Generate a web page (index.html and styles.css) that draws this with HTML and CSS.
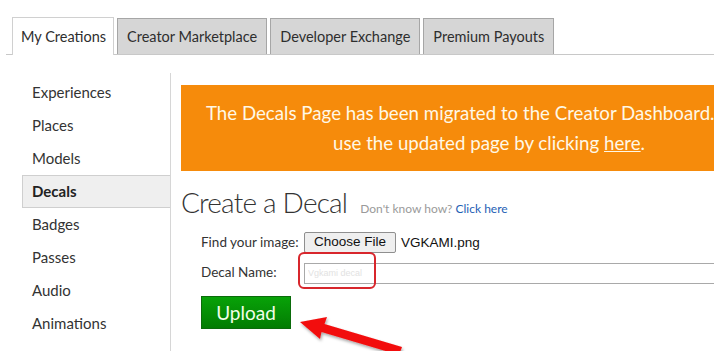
FILE: index.html
```html
<!DOCTYPE html>
<html lang="en">

<head>
    <meta charset="UTF-8">
    <meta name="viewport" content="width=device-width, initial-scale=1.0">
    <title>Create a Decal</title>
    <link rel="stylesheet" href="styles.css">
</head>

<body>
    <!-- Top tabs -->
    <div class="tabs">
        <div class="tab active">My Creations</div>
        <div class="tab">Creator Marketplace</div>
        <div class="tab">Developer Exchange</div>
        <div class="tab">Premium Payouts</div>
    </div>

    <div class="main">
        <ul class="side-nav">
            <li>Experiences</li>
            <li>Places</li>
            <li>Models</li>
            <li class="selected">Decals</li>
            <li>Badges</li>
            <li>Passes</li>
            <li>Audio</li>
            <li>Animations</li>
            <li>Meshes</li>
        </ul>

        <div class="content">
            <div class="banner">
                The Decals Page has been migrated to the Creator Dashboard. Please
                use the updated page by clicking <a href="#">here</a>.
            </div>

            <div class="title-row">
                <h1>Create a Decal</h1>
                <span class="help">Don't know how? <a href="#">Click here</a></span>
            </div>

            <form class="decal-form">
                <div class="form-row">
                    <label>Find your image:</label>
                    <span class="file-btn">Choose File</span>
                    <span class="file-name">VGKAMI.png</span>
                </div>
                <div class="form-row">
                    <label for="decal-name">Decal Name:</label>
                    <div class="name-wrap">
                        <input type="text" id="decal-name" class="name-input" value="Vgkami decal">
                        <span class="mark"></span>
                    </div>
                </div>
                <button type="button" class="upload-btn">Upload</button>
            </form>
        </div>
    </div>

    <!-- Red annotation arrow -->
    <svg class="arrow" width="120" height="50" viewBox="0 0 120 50">
        <defs>
            <filter id="shadow" x="-20%" y="-40%" width="140%" height="180%">
                <feDropShadow dx="1" dy="2" stdDeviation="1.5" flood-color="#000" flood-opacity="0.35" />
            </filter>
        </defs>
        <polygon filter="url(#shadow)" fill="#f20d0d"
            points="2,14 29,9 26.5,16 104,39 101,47 23.5,24 22,31" />
    </svg>
</body>

</html>
```

FILE: styles.css
```css
body {
    margin: 0;
    overflow: hidden;
    background-color: #ffffff;
    color: #343434;
    font-family: "Lato", "Noto Sans", sans-serif;
}

.tabs {
    display: flex;
    align-items: flex-end;
    gap: 3px;
    margin-left: 6px;
    padding: 17px 0 0 6px;
    border-bottom: 1px solid #c8c8c8;
    height: 55px;
    box-sizing: border-box;
}

.tab {
    height: 36px;
    line-height: 36px;
    padding: 0 9px;
    background: #d6d6d6;
    border: 1px solid #a6a6a6;
    border-bottom: none;
    box-sizing: border-box;
    font-size: 14.5px;
    color: #2e2e2e;
    flex-shrink: 0;
}

.tab.active {
    height: 38px;
    line-height: 38px;
    background: #ffffff;
    border-color: #d0d0d0;
    margin-bottom: -1px;
    padding: 0 7px 0 8px;
}

.main {
    display: flex;
    margin-top: 18px;
}

.side-nav {
    list-style: none;
    margin: 0 0 0 22px;
    padding: 3px 0 0 0;
    width: 148px;
    flex-shrink: 0;
    border-right: 1px solid #d6d6d6;
    height: 300px;
}

.side-nav li {
    height: 33px;
    line-height: 33px;
    padding-left: 10px;
    font-size: 15px;
    color: #333;
    box-sizing: border-box;
}

.side-nav li.selected {
    background: #efefef;
    border: 1px solid #cfcfcf;
    border-right: none;
    line-height: 31px;
    padding-left: 9px;
    font-weight: bold;
    color: #222;
}

.content {
    margin-left: 10px;
    padding-top: 12px;
    flex-shrink: 0;
}

.banner {
    width: 616px;
    height: 86px;
    box-sizing: border-box;
    padding: 13px 10px;
    background: #f68b0b;
    color: #fff8e6;
    font-size: 18.7px;
    line-height: 30px;
    text-align: center;
}

.banner a {
    color: #fff8e6;
    text-decoration: underline;
}

.title-row {
    display: flex;
    align-items: baseline;
    gap: 13px;
    margin-top: 12px;
}

.title-row h1 {
    margin: 0;
    font-size: 28px;
    font-weight: 300;
    letter-spacing: -0.8px;
    color: #333;
    line-height: 38px;
}

.help {
    font-size: 12px;
    color: #9a9a9a;
}

.help a {
    color: #1f5fb5;
    text-decoration: none;
}

.decal-form {
    margin: 6px 0 0 20px;
}

.form-row {
    display: flex;
    align-items: center;
    height: 30px;
}

.form-row label {
    width: 103px;
    font-size: 13.5px;
    color: #333;
}

.file-btn {
    font-family: "Liberation Sans", Arial, sans-serif;
    font-size: 13.5px;
    color: #111;
    background: #efefef;
    border: 1px solid #8f8f8f;
    border-radius: 2px;
    padding: 1px 9px 2px 9px;
    line-height: 16px;
}

.file-name {
    font-family: "Liberation Sans", Arial, sans-serif;
    font-size: 13.5px;
    color: #111;
    margin-left: 5px;
}

.name-wrap {
    position: relative;
}

.name-input {
    width: 430px;
    height: 21px;
    box-sizing: border-box;
    border: 1px solid #a9a9a9;
    padding: 0 3px;
    font-size: 9px;
    color: #e2e2e2;
    font-family: "Liberation Sans", sans-serif;
    margin-top: 1px;
}

.mark {
    position: absolute;
    left: -6px;
    top: -8px;
    width: 78px;
    height: 37px;
    border: 2px solid #d8262c;
    border-radius: 6px;
    box-sizing: border-box;
}

.upload-btn {
    margin-top: 9px;
    width: 90px;
    height: 33px;
    border: 1px solid #0b6b0b;
    background: linear-gradient(#08a208, #037c03);
    color: #f2ffe9;
    font-family: "Lato", sans-serif;
    font-size: 19px;
    padding: 0;
    cursor: pointer;
}

.arrow {
    position: absolute;
    left: 298px;
    top: 308px;
}
```
